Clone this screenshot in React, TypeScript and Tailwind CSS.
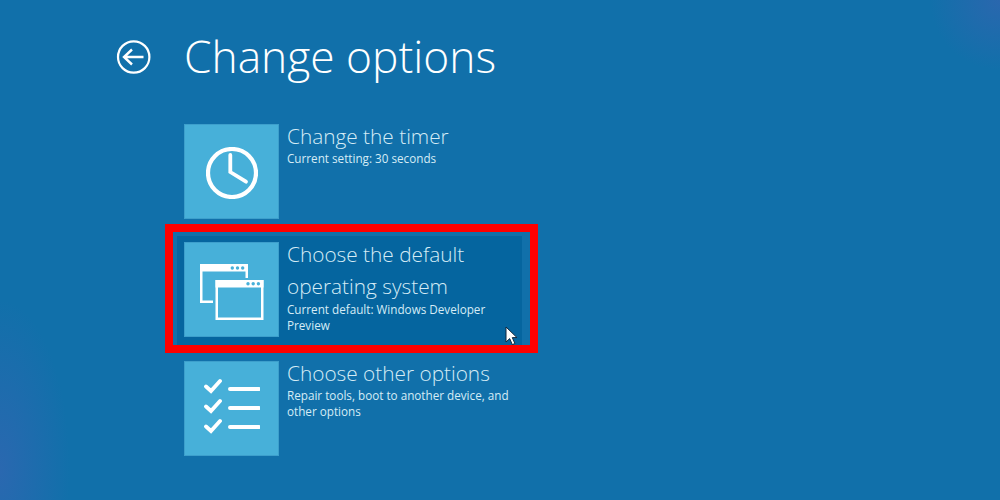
import type { ReactNode } from "react";

const font = "font-['Open_Sans','Noto_Sans',sans-serif]";

function Tile({ children }: { children: ReactNode }) {
  return (
    <div className="w-[95px] h-[95px] shrink-0 bg-[#47b0d9] border border-[#3d9fcc] flex items-center justify-center">
      {children}
    </div>
  );
}

function OptionText({ title, desc }: { title: ReactNode; desc: ReactNode }) {
  return (
    <div className="ml-[8px] -mt-[4px] text-[#d5ecf6]">
      <div className="text-[20.8px] font-light leading-[32px]">{title}</div>
      <div className="text-[11.7px] leading-[16px] -mt-[2px]">{desc}</div>
    </div>
  );
}

function App() {
  return (
    <div
      className={`relative w-[1000px] h-[500px] overflow-hidden bg-[#1170aa] text-white ${font}`}
    >
      {/* 구석 그라데이션 */}
      <div className="absolute inset-0 bg-[radial-gradient(ellipse_70px_170px_at_0px_470px,#2a68b0,transparent)]" />
      <div className="absolute inset-0 bg-[radial-gradient(circle_at_1000px_0px,#2a67ae_0px,transparent_70px)]" />

      <div className="relative pl-[116px] pt-[24px]">
        {/* 헤더 */}
        <div className="flex items-center h-[66px]">
          <svg width="36" height="34" viewBox="0 0 36 34" fill="none" stroke="#fff">
            <circle cx="17.7" cy="17" r="15.7" strokeWidth="2.2" />
            <path d="M27.5 17H8.5M16 9.5L8 17l8 7.5" strokeWidth="2.4" />
          </svg>
          <h1 className="ml-[32px] -mt-[2px] text-[44.3px] font-light leading-none">Change options</h1>
        </div>

        <div className="ml-[49px] mt-[34px] flex flex-col items-start">
          <div className="flex ml-[19px] h-[95px]">
            <Tile>
              <svg className="mt-[2px]" width="52" height="52" viewBox="0 0 52 52" fill="none" stroke="#fff" strokeLinecap="round">
                <circle cx="26" cy="26" r="24" strokeWidth="4.2" />
                <path d="M24.3 8V25L40 34.7" strokeWidth="3.8" />
              </svg>
            </Tile>
            <OptionText title="Change the timer" desc="Current setting: 30 seconds" />
          </div>

          {/* 빨간 강조 박스 */}
          <div className="relative mt-[5px] w-[373px] h-[129px] border-[8px] border-[#ff0000] p-[4px]">
            <div className="flex h-[109px] w-[345px] bg-[#05659f] pl-[7px] pt-[6px]">
              <div className="h-[95px]">
                <Tile>
                  <svg className="mt-[5px]" width="64" height="56" viewBox="0 0 64 56" fill="none">
                    <path d="M13 37.7H1.25V1.25H46.75V14" stroke="#fff" strokeWidth="2.5" />
                    <path d="M0 0H48V7.5H0z" fill="#fff" />
                    <rect x="16.75" y="17.25" width="45.5" height="37.5" stroke="#fff" strokeWidth="2.5" />
                    <path d="M15.5 16H63.5V23.5H15.5z" fill="#fff" />
                    <g fill="#47b0d9">
                      <circle cx="32.3" cy="4" r="1.7" />
                      <circle cx="37.5" cy="4" r="1.7" />
                      <circle cx="42.7" cy="4" r="1.7" />
                      <circle cx="48" cy="19.8" r="1.7" />
                      <circle cx="53.2" cy="19.8" r="1.7" />
                      <circle cx="58.4" cy="19.8" r="1.7" />
                    </g>
                  </svg>
                </Tile>
              </div>
              <div className="ml-[8px] -mt-[4px] text-[#d5ecf6]">
                <div className="text-[20.8px] font-light leading-[32px]">
                  Choose the default
                  <br />
                  operating system
                </div>
                <div className="text-[11.7px] leading-[16px] -mt-[1px]">
                  Current default: Windows Developer
                  <br />
                  Preview
                </div>
              </div>
            </div>
            {/* 마우스 커서 */}
            <svg className="absolute left-[332px] top-[94px]" width="14" height="20" viewBox="0 0 14 20">
              <path d="M1 1v15l3.7-3.4 2.6 6 2.6-1.1-2.6-5.9H12z" fill="#fff" stroke="#12293f" strokeWidth="1" />
            </svg>
          </div>

          <div className="flex ml-[19px] mt-[8px] h-[95px]">
            <Tile>
              <svg className="mb-[5px]" width="56" height="56" viewBox="0 0 56 56" fill="none" stroke="#fff" strokeLinecap="round">
                <path d="M2 8.5L7 13l9-10M2 28.5L7 33l9-10M2 48.5L7 53l9-10" strokeWidth="3.8" />
                <path d="M26 11h29M26 30h29M26 49h29" strokeWidth="4" />
              </svg>
            </Tile>
            <OptionText
              title="Choose other options"
              desc={
                <>
                  Repair tools, boot to another device, and
                  <br />
                  other options
                </>
              }
            />
          </div>
        </div>
      </div>
    </div>
  );
}

export default App;
